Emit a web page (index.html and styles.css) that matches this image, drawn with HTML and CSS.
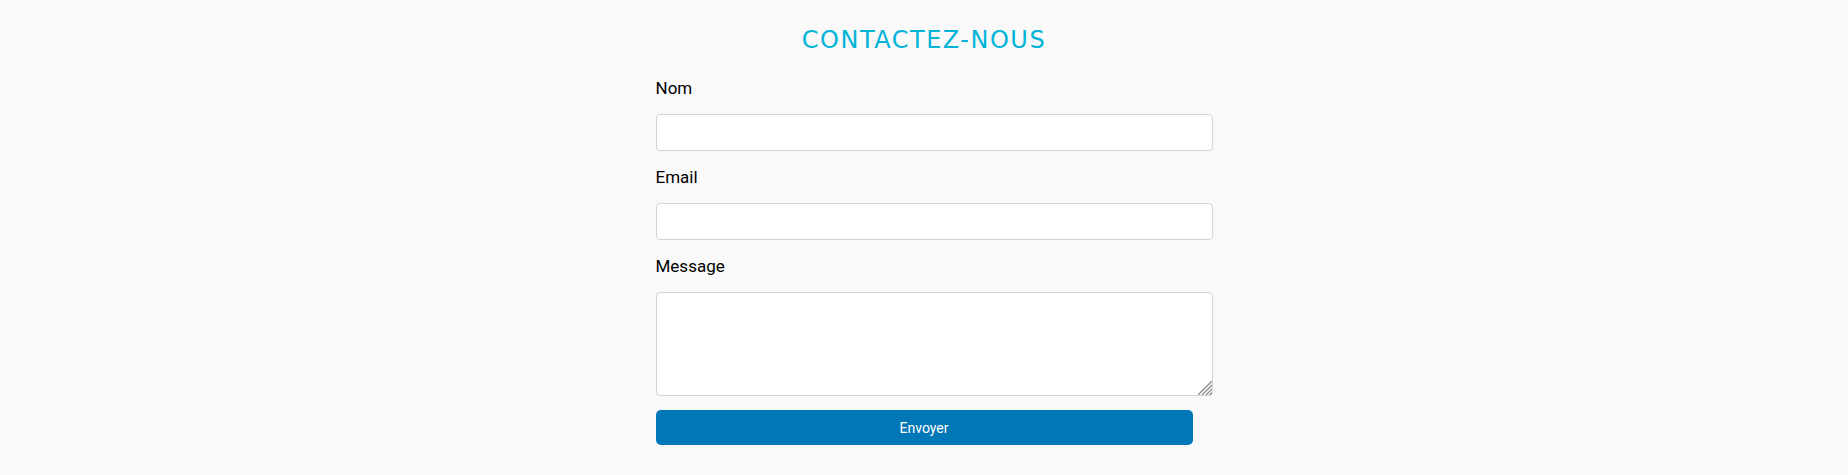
FILE: index.html
```html
<!DOCTYPE html>
<html lang="fr">
<head>
  <meta charset="UTF-8">
  <title>Contactez-nous</title>
  <link rel="stylesheet" href="styles.css">
</head>
<body>

  <!-- Contact form -->
  <div class="contact">
    <h2 class="contact-title">CONTACTEZ-NOUS</h2>
    <form class="contact-form" onsubmit="return false">
      <label for="nom">Nom</label>
      <input type="text" id="nom" name="nom">

      <label for="email">Email</label>
      <input type="email" id="email" name="email">

      <label for="message">Message</label>
      <div class="textarea-wrap">
        <textarea id="message" name="message"></textarea>
        <!-- resize grip -->
        <svg class="grip" width="14" height="14" viewBox="0 0 14 14">
          <g stroke="#8a8a8a" stroke-width="1.3">
            <line x1="14" y1="0" x2="0" y2="14"/>
            <line x1="14" y1="4" x2="4" y2="14"/>
            <line x1="14" y1="8" x2="8" y2="14"/>
            <line x1="14" y1="11.5" x2="11.5" y2="14"/>
          </g>
        </svg>
      </div>

      <button type="submit" class="send-btn">Envoyer</button>
    </form>
  </div>

</body>
</html>
```

FILE: styles.css
```css
body {
  margin: 0;
  background: #f9f9f9;
  font-family: Roboto, 'Liberation Sans', sans-serif;
  color: #000;
}

.contact {
  width: 537px;
  margin: 0 auto;
  padding-top: 25px;
}

.contact-title {
  margin: 0 0 24px;
  font-family: 'DejaVu Sans', sans-serif;
  font-size: 24px;
  font-weight: normal;
  line-height: 30px;
  letter-spacing: 1.5px;
  text-align: center;
  color: #00b4d8;
}

.contact-form label {
  display: block;
  font-size: 17px;
  line-height: 19px;
  margin-bottom: 16px;
}

.contact-form input,
.contact-form textarea {
  display: block;
  width: 100%;
  height: 17px;
  padding: 9px;
  margin: 0 0 17px;
  border: 1px solid #d4d4d4;
  border-radius: 4px;
  background: #fff;
  font-family: Roboto, sans-serif;
  font-size: 14px;
}

/* Message */
.textarea-wrap {
  position: relative;
  margin-bottom: 14px;
}

.contact-form textarea {
  height: 84px;
  margin: 0;
  resize: none;
}

.grip {
  position: absolute;
  right: -19px;
  bottom: 1px;
  pointer-events: none;
}

.send-btn {
  display: block;
  width: 100%;
  height: 35px;
  border: none;
  border-radius: 5px;
  background: #0077b6;
  color: #fff;
  font-family: Roboto, sans-serif;
  font-size: 14px;
  cursor: pointer;
}
```
